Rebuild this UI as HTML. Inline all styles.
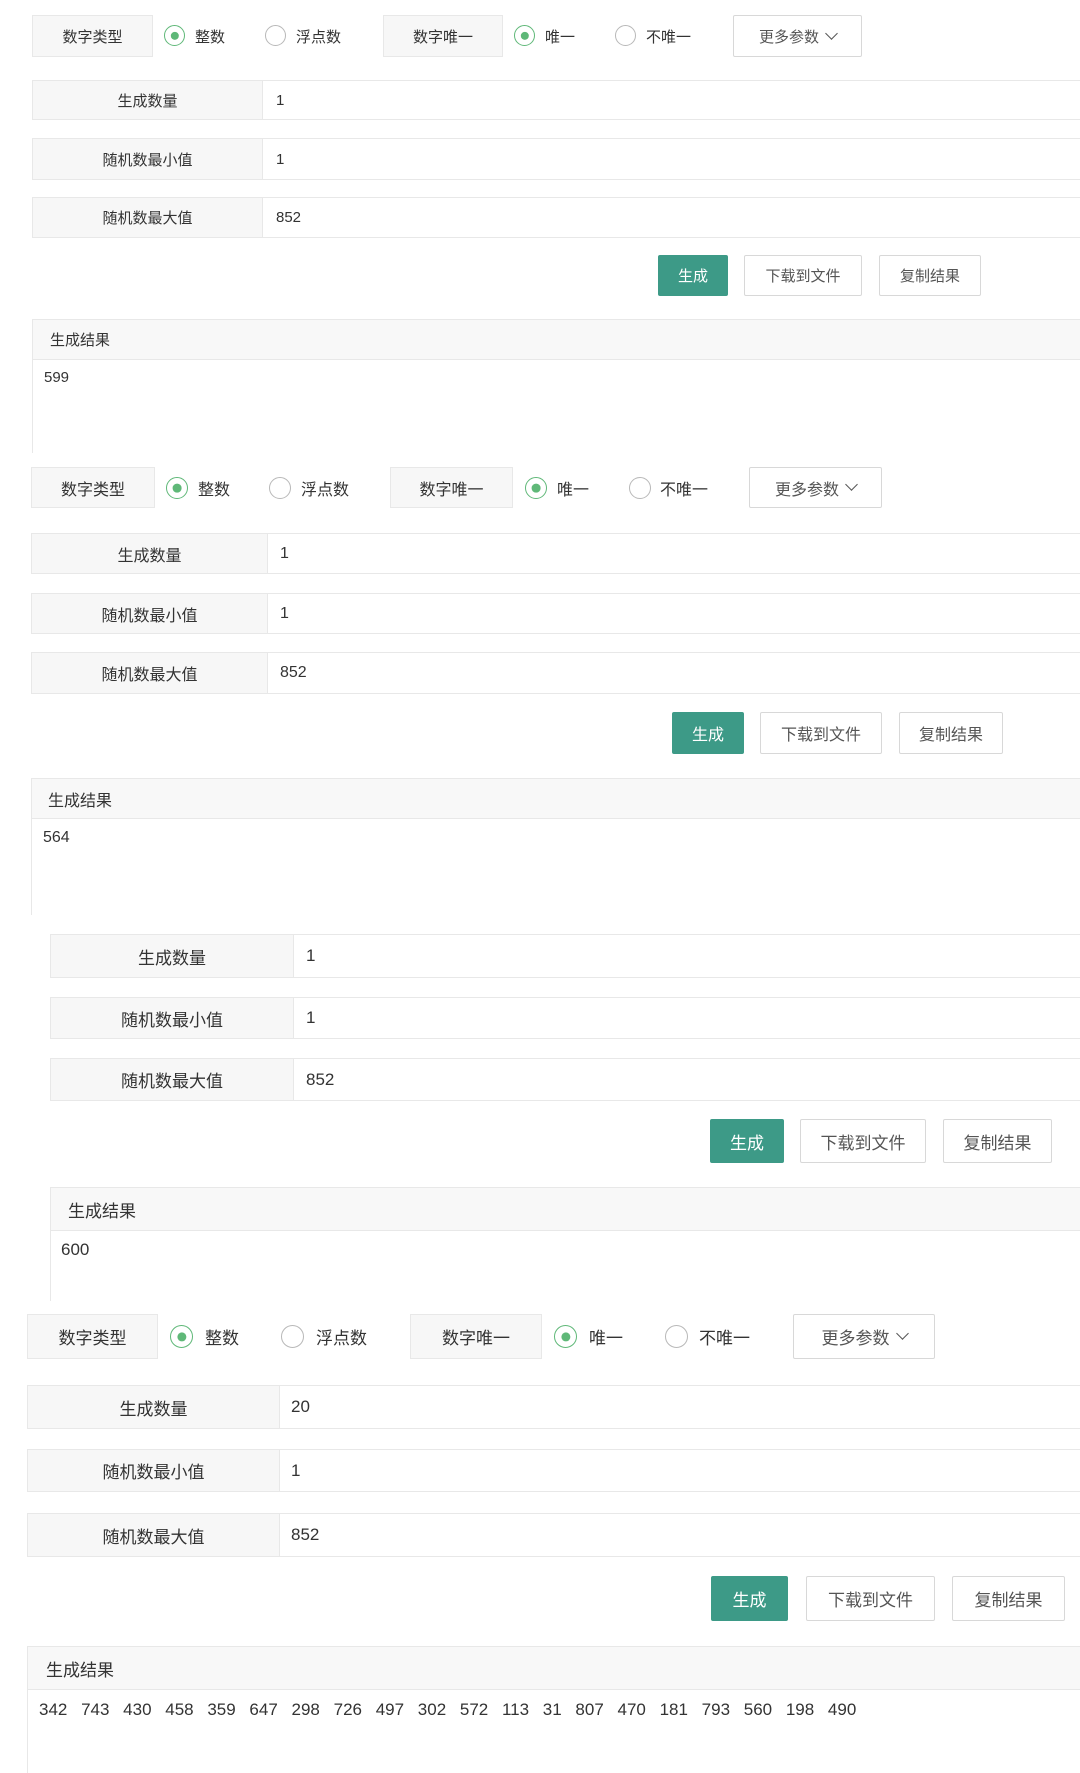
<!DOCTYPE html>
<html><head><meta charset="utf-8"><style>
*{margin:0;padding:0;box-sizing:border-box}
body{width:1080px;height:1773px;background:#fff;position:relative;overflow:hidden;font-family:"Liberation Sans","Noto Sans CJK SC",sans-serif;color:#333}
.a{position:absolute}
.lb{position:absolute;background:#f7f7f7;border:1px solid #e8e8e8;display:flex;align-items:center;justify-content:center}
.row{position:absolute;border:1px solid #e8e8e8;background:#fff;right:-2px}
.row .l{position:absolute;left:0;top:0;bottom:0;background:#f7f7f7;border-right:1px solid #e8e8e8;display:flex;align-items:center;justify-content:center}
.row .v{position:absolute;top:0;bottom:0;display:flex;align-items:center}
.rd{position:absolute;border:1.5px solid #b8b8b8;border-radius:50%;background:#fff}
.rd.on{border-color:#5fb878}
.rd.on::after{content:"";position:absolute;left:50%;top:50%;width:44%;height:44%;transform:translate(-50%,-50%);border-radius:50%;background:#5fb878}
.t{position:absolute;display:flex;align-items:center}
.btn{position:absolute;border:1px solid #d8d8d8;background:#fff;display:flex;align-items:center;justify-content:center;border-radius:2px;color:#555}
.btn.g{background:#3d9a87;border-color:#3d9a87;color:#fff}
.rh{position:absolute;background:#f8f8f8;border:1px solid #e8e8e8;right:-2px;display:flex;align-items:center}
.rb{position:absolute;border-left:1px solid #e8e8e8}
.ch{display:inline-block;width:9px;height:9px;border-right:1.5px solid #555;border-bottom:1.5px solid #555;transform:rotate(45deg);margin-left:8px;margin-top:-6px}
</style></head><body>

<!-- Section 1 -->
<div style="font-size:15px">
<div class="lb" style="left:32px;top:15px;width:121px;height:42px">数字类型</div>
<div class="rd on" style="left:164px;top:25px;width:21px;height:21px"></div>
<div class="t" style="left:195px;top:15px;height:42px">整数</div>
<div class="rd" style="left:265px;top:25px;width:21px;height:21px"></div>
<div class="t" style="left:296px;top:15px;height:42px">浮点数</div>
<div class="lb" style="left:383px;top:15px;width:120px;height:42px">数字唯一</div>
<div class="rd on" style="left:514px;top:25px;width:21px;height:21px"></div>
<div class="t" style="left:545px;top:15px;height:42px">唯一</div>
<div class="rd" style="left:615px;top:25px;width:21px;height:21px"></div>
<div class="t" style="left:646px;top:15px;height:42px">不唯一</div>
<div class="btn" style="left:733px;top:15px;width:129px;height:42px">更多参数<span class="ch"></span></div>

<div class="row" style="left:32px;top:80px;height:40px"><div class="l" style="width:230px">生成数量</div><div class="v" style="left:243px">1</div></div>
<div class="row" style="left:32px;top:138px;height:42px"><div class="l" style="width:230px">随机数最小值</div><div class="v" style="left:243px">1</div></div>
<div class="row" style="left:32px;top:197px;height:41px"><div class="l" style="width:230px">随机数最大值</div><div class="v" style="left:243px">852</div></div>

<div class="btn g" style="left:658px;top:255px;width:70px;height:41px">生成</div>
<div class="btn" style="left:744px;top:255px;width:118px;height:41px">下载到文件</div>
<div class="btn" style="left:879px;top:255px;width:102px;height:41px">复制结果</div>

<div class="rh" style="left:32px;top:319px;height:41px;padding-left:17px">生成结果</div>
<div class="rb" style="left:32px;top:360px;height:93px"></div>
<div class="a" style="left:44px;top:369px">599</div>
</div>

<!-- Section 2 -->
<div style="font-size:16px">
<div class="lb" style="left:31px;top:467px;width:124px;height:41px">数字类型</div>
<div class="rd on" style="left:166px;top:477px;width:22px;height:22px"></div>
<div class="t" style="left:198px;top:467px;height:41px">整数</div>
<div class="rd" style="left:269px;top:477px;width:22px;height:22px"></div>
<div class="t" style="left:301px;top:467px;height:41px">浮点数</div>
<div class="lb" style="left:390px;top:467px;width:123px;height:41px">数字唯一</div>
<div class="rd on" style="left:525px;top:477px;width:22px;height:22px"></div>
<div class="t" style="left:557px;top:467px;height:41px">唯一</div>
<div class="rd" style="left:629px;top:477px;width:22px;height:22px"></div>
<div class="t" style="left:660px;top:467px;height:41px">不唯一</div>
<div class="btn" style="left:749px;top:467px;width:133px;height:41px">更多参数<span class="ch"></span></div>

<div class="row" style="left:31px;top:533px;height:41px"><div class="l" style="width:236px">生成数量</div><div class="v" style="left:248px">1</div></div>
<div class="row" style="left:31px;top:593px;height:41px"><div class="l" style="width:236px">随机数最小值</div><div class="v" style="left:248px">1</div></div>
<div class="row" style="left:31px;top:652px;height:42px"><div class="l" style="width:236px">随机数最大值</div><div class="v" style="left:248px">852</div></div>

<div class="btn g" style="left:672px;top:712px;width:72px;height:42px">生成</div>
<div class="btn" style="left:760px;top:712px;width:122px;height:42px">下载到文件</div>
<div class="btn" style="left:899px;top:712px;width:104px;height:42px">复制结果</div>

<div class="rh" style="left:31px;top:778px;height:41px;padding-left:16px">生成结果</div>
<div class="rb" style="left:31px;top:819px;height:96px"></div>
<div class="a" style="left:43px;top:829px">564</div>
</div>

<!-- Section 3 -->
<div style="font-size:17px">
<div class="row" style="left:50px;top:934px;height:44px"><div class="l" style="width:243px">生成数量</div><div class="v" style="left:255px">1</div></div>
<div class="row" style="left:50px;top:997px;height:42px"><div class="l" style="width:243px">随机数最小值</div><div class="v" style="left:255px">1</div></div>
<div class="row" style="left:50px;top:1058px;height:43px"><div class="l" style="width:243px">随机数最大值</div><div class="v" style="left:255px">852</div></div>

<div class="btn g" style="left:710px;top:1119px;width:74px;height:44px">生成</div>
<div class="btn" style="left:800px;top:1119px;width:126px;height:44px">下载到文件</div>
<div class="btn" style="left:943px;top:1119px;width:109px;height:44px">复制结果</div>

<div class="rh" style="left:50px;top:1187px;height:44px;padding-left:17px">生成结果</div>
<div class="rb" style="left:50px;top:1231px;height:70px"></div>
<div class="a" style="left:61px;top:1240px">600</div>
</div>

<!-- Section 4 -->
<div style="font-size:17px">
<div class="lb" style="left:27px;top:1314px;width:131px;height:45px">数字类型</div>
<div class="rd on" style="left:170px;top:1325px;width:23px;height:23px"></div>
<div class="t" style="left:205px;top:1314px;height:45px">整数</div>
<div class="rd" style="left:281px;top:1325px;width:23px;height:23px"></div>
<div class="t" style="left:316px;top:1314px;height:45px">浮点数</div>
<div class="lb" style="left:410px;top:1314px;width:132px;height:45px">数字唯一</div>
<div class="rd on" style="left:554px;top:1325px;width:23px;height:23px"></div>
<div class="t" style="left:589px;top:1314px;height:45px">唯一</div>
<div class="rd" style="left:665px;top:1325px;width:23px;height:23px"></div>
<div class="t" style="left:699px;top:1314px;height:45px">不唯一</div>
<div class="btn" style="left:793px;top:1314px;width:142px;height:45px">更多参数<span class="ch"></span></div>

<div class="row" style="left:27px;top:1385px;height:44px"><div class="l" style="width:252px">生成数量</div><div class="v" style="left:263px">20</div></div>
<div class="row" style="left:27px;top:1449px;height:43px"><div class="l" style="width:252px">随机数最小值</div><div class="v" style="left:263px">1</div></div>
<div class="row" style="left:27px;top:1513px;height:44px"><div class="l" style="width:252px">随机数最大值</div><div class="v" style="left:263px">852</div></div>

<div class="btn g" style="left:711px;top:1576px;width:77px;height:45px">生成</div>
<div class="btn" style="left:806px;top:1576px;width:129px;height:45px">下载到文件</div>
<div class="btn" style="left:952px;top:1576px;width:113px;height:45px">复制结果</div>

<div class="rh" style="left:27px;top:1646px;height:44px;padding-left:18px">生成结果</div>
<div class="rb" style="left:27px;top:1690px;height:83px"></div>
<div class="a" style="left:39px;top:1700px;word-spacing:9px;white-space:nowrap">342 743 430 458 359 647 298 726 497 302 572 113 31 807 470 181 793 560 198 490</div>
</div>

</body></html>
